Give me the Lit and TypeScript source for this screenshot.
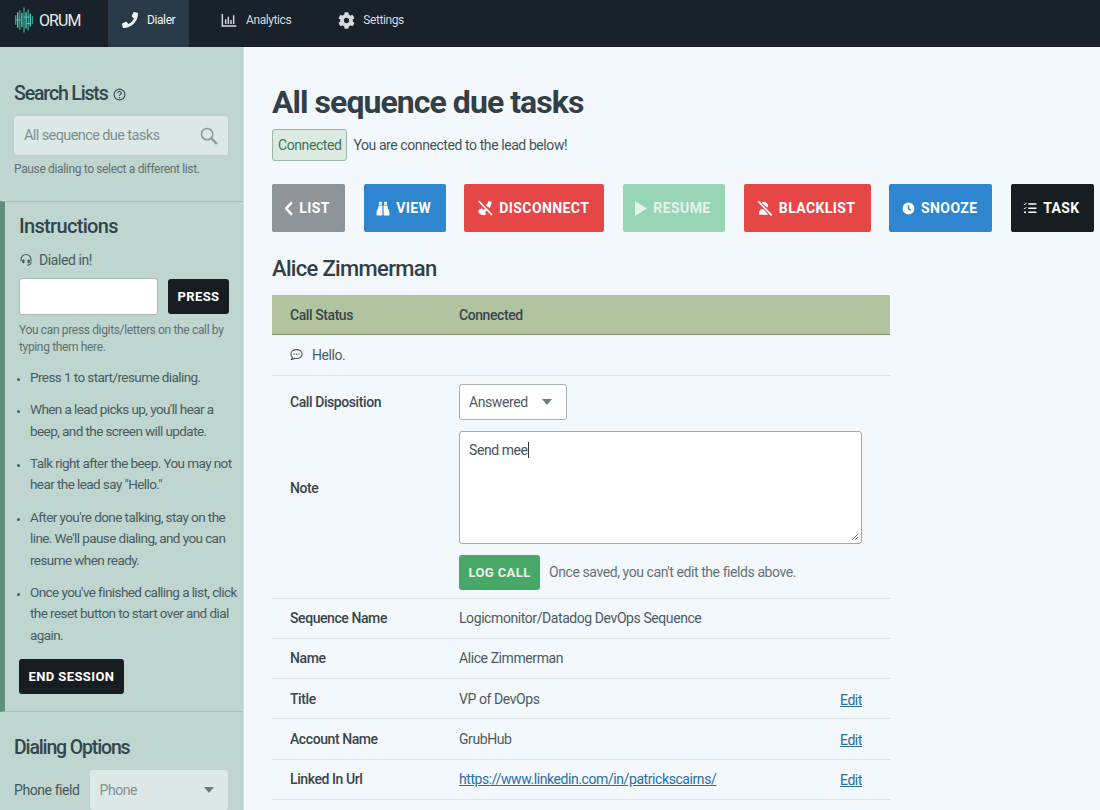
import { LitElement, html, css, svg } from 'lit';
import { customElement } from 'lit/decorators.js';

const PHONE = svg`<path fill="currentColor" d="M493.4 24.6l-104-24c-11.3-2.6-22.9 3.3-27.5 13.9l-48 112c-4.2 9.8-1.4 21.3 6.9 28l60.6 49.6c-36 76.7-98.9 140.5-177.2 177.2l-49.6-60.6c-6.8-8.3-18.2-11.1-28-6.9l-112 48C3.9 366.5-2 378.1.6 389.4l24 104C27.1 504.2 36.7 512 48 512c256.1 0 464-207.5 464-464 0-11.2-7.7-20.9-18.6-23.4z"/>`;
const COG = svg`<path fill="currentColor" d="M487.4 315.7l-42.6-24.6c4.3-23.2 4.3-47 0-70.2l42.6-24.6c4.9-2.8 7.1-8.6 5.5-14-11.1-35.6-30-67.8-54.7-94.6-3.8-4.1-10-5.1-14.8-2.3L380.8 110c-17.9-15.4-38.5-27.3-60.8-35.1V25.8c0-5.6-3.9-10.5-9.4-11.7-36.7-8.2-74.3-7.8-109.2 0-5.5 1.2-9.4 6.1-9.4 11.7V75c-22.2 7.9-42.8 19.8-60.8 35.1L88.7 85.5c-4.9-2.8-11-1.9-14.8 2.3-24.7 26.7-43.6 58.9-54.7 94.6-1.7 5.4.6 11.2 5.5 14L67.3 221c-4.3 23.2-4.3 47 0 70.2l-42.6 24.6c-4.9 2.8-7.1 8.6-5.5 14 11.1 35.6 30 67.8 54.7 94.6 3.8 4.1 10 5.1 14.8 2.3l42.6-24.6c17.9 15.4 38.5 27.3 60.8 35.1v49.2c0 5.6 3.9 10.5 9.4 11.7 36.7 8.2 74.3 7.8 109.2 0 5.5-1.2 9.4-6.1 9.4-11.7v-49.2c22.2-7.9 42.8-19.8 60.8-35.1l42.6 24.6c4.9 2.8 11 1.9 14.8-2.3 24.7-26.7 43.6-58.9 54.7-94.6 1.5-5.5-.7-11.3-5.6-14.1zM256 336c-44.1 0-80-35.9-80-80s35.9-80 80-80 80 35.9 80 80-35.9 80-80 80z"/>`;

// hand drawn icons, all on a 24 box unless a box is passed
const ico = (body: unknown, size = 16, box = '0 0 24 24', height = size) =>
  html`<svg width=${size} height=${height} viewBox=${box} preserveAspectRatio="none" aria-hidden="true">${body}</svg>`;

const CHART = svg`<path d="M2 3v18h21" fill="none" stroke="currentColor" stroke-width="2.2"/><path d="M7 11v7M11 7v11M15 12v6M19 5v13" stroke="currentColor" stroke-width="2.2"/>`;
const HELP = svg`<circle cx="12" cy="12" r="10" fill="none" stroke="currentColor" stroke-width="2"/><path d="M8.8 9.4c.3-4 6.6-4 6.6-.2 0 2.6-3.4 2.6-3.4 5.4" fill="none" stroke="currentColor" stroke-width="2"/><circle cx="12" cy="18" r="1.4" fill="currentColor"/>`;
const SEARCH = svg`<circle cx="9.5" cy="9.5" r="7.5" fill="none" stroke="currentColor" stroke-width="2"/><path d="M15 15l7.5 7.5" stroke="currentColor" stroke-width="3.2"/>`;
const CHEVRON = svg`<path d="M17 2L7 12l10 10" fill="none" stroke="currentColor" stroke-width="4"/>`;
const BINOCULARS = svg`<path fill="currentColor" d="M5 1h5v5H5zM14 1h5v5h-5zM4.500 7H11v15a1 1 0 0 1-1 1H2a1 1 0 0 1-1-1v-4c0-3.500 3-5 3.500-11zM13 7h6.500c.5 6 3.500 7.500 3.500 11v4a1 1 0 0 1-1 1h-8a1 1 0 0 1-1-1z"/>`;
const PHONE_SLASH = svg`<path fill="currentColor" d="M3 14.500l4-2 2.600 2.400 3-2.600 2.800 2.800-3 3 1 3.400-2 1.500C7 23.500 2.500 20.500 1.500 17zM13 8l3-3 1.500-3.500L22 3c0 3-1.300 6.300-3.300 9z"/><path d="M2.500 1.500l20 21" stroke="currentColor" stroke-width="2.600"/>`;
const PLAY = svg`<path fill="currentColor" d="M0 0l24 12L0 24z"/>`;
const USER_SLASH = svg`<path fill="currentColor" d="M7 4.500a5.600 5.600 0 0 1 9.600 3.800c0 1-.3 2-.8 2.800zM3 22v-3c0-3.600 2.800-5.600 6-5.600l8 8.600z"/><path d="M2 2l20 21" stroke="currentColor" stroke-width="2.600"/>`;
const CLOCK = svg`<path fill="currentColor" fill-rule="evenodd" d="M12 1a11 11 0 1 1 0 22 11 11 0 0 1 0-22zm-1.500 5v7.200l5.200 3 1.300-2-3.500-2V6z"/>`;
const TASKS = svg`<path fill="currentColor" d="M9 4h14v2.600H9zM9 11h14v2.600H9zM9 18h14v2.600H9z"/><path d="M1.500 5l1.500 1.500L6 3M1.500 12l1.500 1.500L6 10" fill="none" stroke="currentColor" stroke-width="1.600"/><circle cx="3.500" cy="19.300" r="1.800" fill="currentColor"/>`;
const HEADSET = svg`<path d="M3.500 14v-3a8.500 8.500 0 0 1 17 0v3M20.500 15c0 4-3 6-6.500 6" fill="none" stroke="currentColor" stroke-width="2"/><rect x="5.500" y="11" width="4" height="6.500" rx="1.500" fill="currentColor"/><rect x="14.500" y="11" width="4" height="6.500" rx="1.500" fill="currentColor"/>`;
const COMMENT = svg`<path d="M12 3c5.800 0 10.500 3.600 10.500 8.200S17.800 19.400 12 19.400c-1.300 0-2.600-.2-3.700-.5C7 20 4.800 21.200 2.500 21.200c1-1.200 1.900-2.800 2-4.300-1.900-1.500-3-3.500-3-5.700C1.500 6.600 6.200 3 12 3z" fill="none" stroke="currentColor" stroke-width="2"/><circle cx="7.500" cy="11.200" r="1.300" fill="currentColor"/><circle cx="12" cy="11.200" r="1.300" fill="currentColor"/><circle cx="16.500" cy="11.200" r="1.300" fill="currentColor"/>`;

// bars of the logo: [top, bottom], x step 3
const LOGO_BARS = [
  [13, 27], [9, 31], [6, 34], [10, 30], [2, 38], [9, 32], [5, 35], [11, 29], [14, 26],
];

const STEPS = [
  'Press 1 to start/resume dialing.',
  "When a lead picks up, you'll hear a beep, and the screen will update.",
  'Talk right after the beep. You may not hear the lead say "Hello."',
  "After you're done talking, stay on the line. We'll pause dialing, and you can resume when ready.",
  "Once you've finished calling a list, click the reset button to start over and dial again.",
];

@customElement('app-root')
export class AppRoot extends LitElement {
  static styles = css`
    :host {
      display: block;
      height: 810px;
      overflow: hidden;
      font-family: Roboto, 'Liberation Sans', sans-serif;
      font-size: 14px;
      letter-spacing: -0.42px;
      color: #3c4a50;
      background: #f2f8fb;
    }
    svg { flex: none; }

    .topbar {
      display: flex;
      height: 47px;
      background: #19212a;
      color: #e6ebec;
    }
    .logo {
      display: flex;
      align-items: center;
      gap: 5px;
      width: 108px;
      padding: 0 0 7px 14px;
      box-sizing: border-box;
      font-size: 16px;
      font-weight: 400;
      letter-spacing: -0.9px;
      color: #e8edee;
    }
    .tab {
      display: flex;
      align-items: center;
      gap: 9px;
      padding: 0 14px 7px;
      font-size: 12px;
      letter-spacing: -0.4px;
      color: #d5dbdd;
    }
    .tab.active {
      width: 81px;
      box-sizing: border-box;
      background: #2a3947;
      color: #eef1f2;
    }
    .tab.analytics { margin-left: 18px; }
    .tab.settings { margin-left: 19px; gap: 8px; }

    .body { display: flex; height: 763px; }

    .side {
      flex: none;
      width: 244px;
      box-sizing: border-box;
      background: #bfd5d0;
      border-right: 1px solid #d5e2e0;
      color: #4d5f60;
      overflow: hidden;
    }
    .side-top { padding: 35px 15px 0 14px; height: 154px; box-sizing: border-box; }
    .side h2 {
      margin: 0;
      font-size: 19.500px;
      line-height: 24px;
      font-weight: 500;
      letter-spacing: -1.150px;
      color: #33464d;
      display: flex;
      align-items: center;
      gap: 5px;
    }
    .search {
      display: flex;
      align-items: center;
      justify-content: space-between;
      height: 39px;
      margin-top: 10px;
      padding: 0 10px;
      box-sizing: border-box;
      background: #dce8e5;
      border-radius: 3px;
      box-shadow: 0 0 2px #aec6c0;
      color: #80908f;
      font-size: 14.500px;
      letter-spacing: -0.6px;
    }
    .search svg { color: #8b9a9a; }
    .hint {
      font-size: 12px;
      line-height: 20px;
      letter-spacing: -0.35px;
      color: #5f7271;
    }
    .search + .hint { margin-top: 4px; }

    .instructions {
      height: 511px;
      box-sizing: border-box;
      padding: 12px 14px 0 14px;
      border-top: 1px solid #a3bfb9;
      border-bottom: 1px solid #a3bfb9;
      border-left: 5px solid #5f9079;
    }
    .side .instructions h2 { font-size: 20px; letter-spacing: -0.67px; }
    .dialed {
      display: flex;
      align-items: center;
      gap: 6px;
      margin-top: 12px;
      line-height: 20px;
      color: #4a5c5e;
    }
    .press-row {
      display: flex;
      align-items: center;
      gap: 10px;
      margin-top: 8px;
    }
    .press-input {
      width: 139px;
      height: 37px;
      box-sizing: border-box;
      background: #fff;
      border: 1px solid #a9b8b6;
      border-radius: 3px;
    }
    .instructions .hint { margin-top: 7px; line-height: 17px; }
    .steps {
      margin: 11px -8px 13px 0;
      padding: 0 0 0 11px;
      font-size: 13.500px;
      letter-spacing: -0.58px;
      color: #4a5c5e;
    }
    .steps li { line-height: 21.500px; margin-bottom: 10.700px; }
    .steps li:last-child { margin-bottom: 0; }
    .steps li::marker { font-size: 11px; }

    .btn {
      display: inline-flex;
      align-items: center;
      justify-content: center;
      gap: 6px;
      box-sizing: border-box;
      height: 48px;
      padding-right: 2px;
      border-radius: 2px;
      font-size: 14px;
      font-weight: 700;
      letter-spacing: 0.4px;
      color: #fff;
    }
    .btn.small { height: 35px; padding-right: 0; font-size: 13px; letter-spacing: 0.4px; border-radius: 3px; }
    .black { background: #171d21; }
    .grey { background: #8f9499; }
    .blue { background: #2f86d0; }
    .red { background: #e54747; }
    .mint { background: #97d5b5; color: #e3f4eb; }
    .green { background: #48a868; color: #e5f4ea; }

    .options { padding: 24px 15px 0 14px; }
    .phone-row {
      display: flex;
      align-items: center;
      gap: 10px;
      margin-top: 10px;
      color: #46585a;
    }
    .phone-select {
      display: flex;
      align-items: center;
      justify-content: space-between;
      flex: 1;
      height: 40px;
      padding: 0 14px 0 10px;
      box-sizing: border-box;
      background: #dce8e5;
      border-radius: 3px;
      color: #84938f;
    }
    .caret {
      width: 0;
      height: 0;
      border-left: 5px solid transparent;
      border-right: 5px solid transparent;
      border-top: 6px solid #6f7b7e;
    }

    .main { flex: 1; min-width: 0; padding: 34px 0 0 28px; }
    h1 {
      margin: 0;
      font-size: 32px;
      line-height: 42px;
      font-weight: 700;
      letter-spacing: -0.95px;
      color: #333f46;
    }
    .status {
      display: flex;
      align-items: center;
      gap: 6px;
      margin-top: 6px;
      color: #47545a;
    }
    .badge {
      display: flex;
      align-items: center;
      height: 32px;
      padding: 0 5px;
      box-sizing: border-box;
      background: #dbebe2;
      border: 1px solid #9db5a8;
      border-radius: 3px;
      color: #3f7458;
    }
    .actions { display: flex; margin-top: 23px; width: 822px; justify-content: space-between; }

    h3 {
      margin: 20px 0 0;
      font-size: 22px;
      line-height: 34px;
      font-weight: 500;
      letter-spacing: -0.67px;
      color: #333f46;
    }

    .table { width: 618px; margin-top: 9px; }
    .row {
      display: flex;
      align-items: center;
      min-height: 40.250px;
      padding: 0 28px 0 18px;
      box-sizing: border-box;
      border-bottom: 1px solid #dde3e5;
      color: #4f5b60;
    }
    .row .label { flex: none; width: 169px; font-weight: 500; color: #3a464c; }
    .row .value { flex: 1; min-width: 0; }
    .row.head {
      height: 40px;
      background: #b1c49f;
      border-bottom: 1px solid #7d8f6e;
    }
    .row.hello { gap: 9px; }
    .row.hello svg { color: #4b575c; }

    .disposition { height: 55px; padding-bottom: 3px; border-bottom: none; min-height: 0; }
    .select {
      display: flex;
      align-items: center;
      justify-content: space-between;
      width: 108px;
      height: 36px;
      padding: 0 14px 0 9px;
      box-sizing: border-box;
      background: #fff;
      border: 1px solid #a9b1b5;
      border-radius: 3px;
    }
    .note-row { align-items: flex-start; padding-bottom: 8px; }
    .note-label { padding-top: 49px; }
    .note {
      position: relative;
      height: 113px;
      box-sizing: border-box;
      padding: 8px 9px;
      background: #fff;
      border: 1px solid #a3abb0;
      border-radius: 3px;
      color: #46525a;
      line-height: 21px;
    }
    .note .cursor { border-right: 1px solid #333; }
    .grip { position: absolute; right: 2px; bottom: 2px; }
    .log-row {
      display: flex;
      align-items: center;
      gap: 9px;
      margin-top: 11px;
      color: #66727a;
    }
    a { color: #2c6ea8; text-decoration: underline; }
    .edit { flex: none; padding-top: 2px; }
  `;

  private renderLogo() {
    return html`<svg width="20" height="28" viewBox="0 0 28 40" aria-hidden="true">
      ${LOGO_BARS.map(([y1, y2], i) => svg`<path d="M${2 + i * 3} ${y1}V${y2}" stroke=${i % 2 === 0 ? '#2f9c92' : '#58c8b2'} stroke-width="2"/>`)}
      <path d="M2 20h8M14 16h8M17 25h6" stroke="#58c8b2" stroke-width="1.300"/>
    </svg>`;
  }

  private renderRow(label: string, value: unknown, edit = false) {
    return html`<div class="row">
      <div class="label">${label}</div>
      <div class="value">${value}</div>
      ${edit ? html`<a class="edit" href="#">Edit</a>` : ''}
    </div>`;
  }

  render() {
    return html`
      <div class="topbar">
        <div class="logo">${this.renderLogo()}ORUM</div>
        <div class="tab active">${ico(PHONE, 16, '0 0 512 512')}Dialer</div>
        <div class="tab analytics">${ico(CHART, 16)}Analytics</div>
        <div class="tab settings">${ico(COG, 17, '0 0 512 512')}Settings</div>
      </div>
      <div class="body">
        <aside class="side">
          <div class="side-top">
            <h2>Search Lists ${ico(HELP, 13)}</h2>
            <div class="search">All sequence due tasks ${ico(SEARCH, 18)}</div>
            <div class="hint">Pause dialing to select a different list.</div>
          </div>
          <div class="instructions">
            <h2>Instructions</h2>
            <div class="dialed">${ico(HEADSET, 14)}Dialed in!</div>
            <div class="press-row">
              <div class="press-input"></div>
              <div class="btn small black" style="width:61px">PRESS</div>
            </div>
            <div class="hint">You can press digits/letters on the call by typing them here.</div>
            <ul class="steps">${STEPS.map((s) => html`<li>${s}</li>`)}</ul>
            <div class="btn small black" style="width:105px">END SESSION</div>
          </div>
          <div class="options">
            <h2>Dialing Options</h2>
            <div class="phone-row">
              Phone field
              <div class="phone-select">Phone <span class="caret"></span></div>
            </div>
          </div>
        </aside>
        <main class="main">
          <h1>All sequence due tasks</h1>
          <div class="status">
            <div class="badge">Connected</div>
            You are connected to the lead below!
          </div>
          <div class="actions">
            <div class="btn grey" style="width:73px">${ico(CHEVRON, 8, '5 0 14 24', 15)}LIST</div>
            <div class="btn blue" style="width:82px">${ico(BINOCULARS, 14, '0 0 24 24', 15)}VIEW</div>
            <div class="btn red" style="width:140px">${ico(PHONE_SLASH, 16)}DISCONNECT</div>
            <div class="btn mint" style="width:102px">${ico(PLAY, 12, '0 0 24 24', 15)}RESUME</div>
            <div class="btn red" style="width:127px">${ico(USER_SLASH, 16)}BLACKLIST</div>
            <div class="btn blue" style="width:103px">${ico(CLOCK, 13)}SNOOZE</div>
            <div class="btn black" style="width:83px">${ico(TASKS, 14)}TASK</div>
          </div>
          <h3>Alice Zimmerman</h3>
          <div class="table">
            <div class="row head"><div class="label">Call Status</div><div class="label">Connected</div></div>
            <div class="row hello">${ico(COMMENT, 13)}Hello.</div>
            <div class="row disposition">
              <div class="label">Call Disposition</div>
              <div class="select">Answered <span class="caret"></span></div>
            </div>
            <div class="row note-row">
              <div class="label note-label">Note</div>
              <div class="value">
                <div class="note">
                  Send me<span class="cursor">e</span>
                  <svg class="grip" width="9" height="9" viewBox="0 0 9 9"><path d="M8 2L2 8M8 5L5 8" stroke="#777" stroke-width="1"/></svg>
                </div>
                <div class="log-row">
                  <div class="btn small green" style="width:81px">LOG CALL</div>
                  Once saved, you can't edit the fields above.
                </div>
              </div>
            </div>
            ${this.renderRow('Sequence Name', 'Logicmonitor/Datadog DevOps Sequence')}
            ${this.renderRow('Name', 'Alice Zimmerman')}
            ${this.renderRow('Title', 'VP of DevOps', true)}
            ${this.renderRow('Account Name', 'GrubHub', true)}
            ${this.renderRow('Linked In Url', html`<a href="#">https://www.linkedin.com/in/patrickscairns/</a>`, true)}
          </div>
        </main>
      </div>
    `;
  }
}
